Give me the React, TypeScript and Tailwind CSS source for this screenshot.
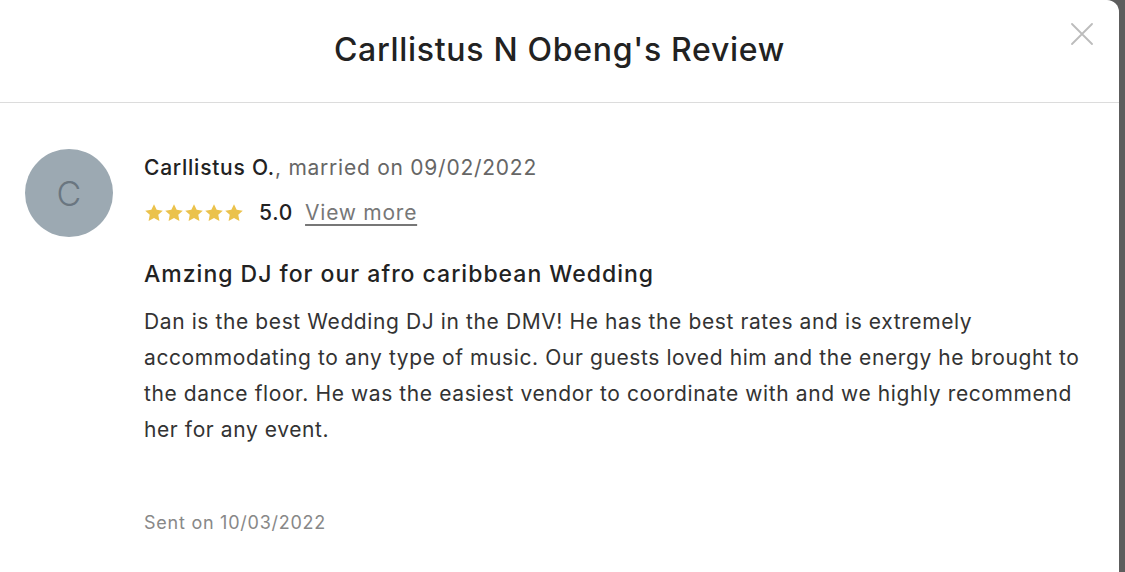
const Star = () => (
	<svg viewBox="0 0 24 24" className="w-[20px] h-[20px]" fill="#ebc24c">
		<path d="M12 1.5l3.2 6.7 7.3 1-5.4 5 1.4 7.3L12 18l-6.5 3.5 1.4-7.3-5.4-5 7.3-1z" />
	</svg>
);

const CloseIcon = () => (
	<svg viewBox="0 0 22 22" className="w-[22px] h-[22px]" stroke="#bcbcbc" strokeWidth="1.8" strokeLinecap="round">
		<path d="M1 1l20 20M21 1L1 21" />
	</svg>
);

const body =
	'Dan is the best Wedding DJ in the DMV! He has the best rates and is extremely accommodating to any type of music. Our guests loved him and the energy he brought to the dance floor. He was the easiest vendor to coordinate with and we highly recommend her for any event.';

export default function App() {
	return (
		<div className="flex flex-row w-[1125px] h-[572px] overflow-hidden bg-[#5d5d5d] font-['Inter',sans-serif]">
			<div className="flex flex-col w-[1119px] h-full bg-white rounded-tr-[12px]">
				<div className="relative flex items-center justify-center h-[103px] border-b border-[#dcdcdc]">
					<h1 className="text-[32px] font-medium text-[#222] tracking-[0.7px] pb-[2px]">
						Carllistus N Obeng's Review
					</h1>
					<button className="absolute right-[26px] top-[23px]">
						<CloseIcon />
					</button>
				</div>
				<div className="flex flex-row pl-[25px] pt-[46px] gap-[31px]">
					<div className="flex items-center justify-center w-[88px] h-[88px] rounded-full bg-[#9ca9b2] text-[#6a7680] text-[34px] font-light shrink-0">
						C
					</div>
					<div className="flex flex-col pt-[5px] pr-[22px] tracking-[0.75px]">
						<div className="text-[21px] text-[#666] leading-[28px]">
							<span className="font-medium text-[#222]">Carllistus O.</span>, married on 09/02/2022
						</div>
						<div className="flex flex-row items-center mt-[16px] h-[30px]">
							<div className="flex flex-row gap-0">
								<Star />
								<Star />
								<Star />
								<Star />
								<Star />
							</div>
							<span className="ml-[15px] text-[21px] font-medium text-[#222]">5.0</span>
							<span className="ml-[12px] text-[21px] text-[#777] underline underline-offset-[4px]">
								View more
							</span>
						</div>
						<h2 className="mt-[30px] text-[23px] font-medium text-[#222] leading-[32px] tracking-[1px]">
							Amzing DJ for our afro caribbean Wedding
						</h2>
						<p className="mt-[14px] text-[21px] text-[#333] leading-[36px] tracking-[0.6px]">{body}</p>
						<div className="mt-[61px] text-[18px] text-[#888]">Sent on 10/03/2022</div>
					</div>
				</div>
			</div>
			<div className="w-[6px] h-full bg-[#5d5d5d]" />
		</div>
	);
}
